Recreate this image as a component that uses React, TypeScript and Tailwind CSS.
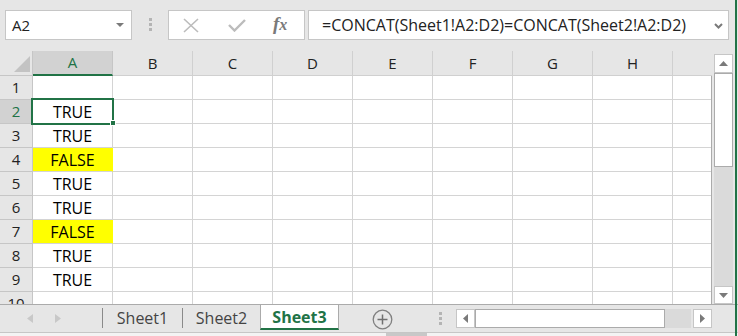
import React from 'react';

const cols = ['A', 'B', 'C', 'D', 'E', 'F', 'G', 'H'];

const rows: { n: number; v: string }[] = [
  { n: 1, v: '' },
  { n: 2, v: 'TRUE' },
  { n: 3, v: 'TRUE' },
  { n: 4, v: 'FALSE' },
  { n: 5, v: 'TRUE' },
  { n: 6, v: 'TRUE' },
  { n: 7, v: 'FALSE' },
  { n: 8, v: 'TRUE' },
  { n: 9, v: 'TRUE' },
  { n: 10, v: '' },
];

function TopBar() {
  return (
    <div className="h-[51px] shrink-0 flex items-start pt-[10px] pl-[5px]">
      <div className="relative w-[127px] h-[30px] bg-white border border-[#c6c6c6] flex items-center pl-[6px] text-[15px] text-[#222]">
        A2
        <svg className="absolute left-[110px] top-[12px]" width="8" height="5" viewBox="0 0 8 5">
          <polygon points="0,0 8,0 4,4" fill="#7a7a7a" />
        </svg>
      </div>
      <div className="ml-[17px] mt-[8px] flex flex-col gap-[2px]">
        <div className="w-[3px] h-[3px] bg-[#b4b4b4]" />
        <div className="w-[3px] h-[3px] bg-[#b4b4b4]" />
        <div className="w-[3px] h-[3px] bg-[#b4b4b4]" />
      </div>
      <div className="ml-[16px] w-[137px] h-[30px] bg-white border border-[#c6c6c6] flex items-center">
        <svg className="ml-[14px]" width="16" height="15" viewBox="0 0 16 15">
          <path d="M1 1 L15 14 M15 1 L1 14" stroke="#bcbcbc" strokeWidth="1.6" />
        </svg>
        <svg className="ml-[29px]" width="18" height="14" viewBox="0 0 18 14">
          <path d="M1 7 L6.5 12.5 L17 2" stroke="#bcbcbc" strokeWidth="2.4" fill="none" />
        </svg>
        <span className="ml-[27px] font-['Liberation_Serif',serif] italic font-bold text-[19px] text-[#7a7a7a] leading-none -mt-[3px]">
          f<span className="text-[16px]">x</span>
        </span>
      </div>
      <div className="ml-[3px] relative w-[421px] h-[30px] bg-white border border-[#c6c6c6] flex items-center pl-[13px] text-[16px] text-[#222] whitespace-nowrap">
        =CONCAT(Sheet1!A2:D2)=CONCAT(Sheet2!A2:D2)
        <svg className="absolute left-[405px] top-[12px]" width="9" height="6" viewBox="0 0 9 6">
          <path d="M1 1 L4.5 4.5 L8 1" stroke="#7a7a7a" strokeWidth="2" fill="none" />
        </svg>
      </div>
    </div>
  );
}

function Grid() {
  return (
    <div className="relative w-[712px] h-[253px] overflow-hidden">
      <div className="flex h-[25px] text-[15px] text-[#222]">
        <div className="relative w-[33px] border-r border-b border-[#c6c6c6]">
          <svg className="absolute left-[14px] top-[5px]" width="16" height="16" viewBox="0 0 16 16">
            <polygon points="16,0 16,16 0,16" fill="#c3c3c3" />
          </svg>
        </div>
        {cols.map((c) =>
          c === 'A' ? (
            <div
              key={c}
              className="w-[80px] bg-[#d2d2d2] border-r border-b-2 border-r-[#c6c6c6] border-b-[#217346] text-[#217346] flex items-center justify-center"
            >
              {c}
            </div>
          ) : (
            <div key={c} className="w-[80px] border-r border-b border-[#d0d0d0] flex items-center justify-center">
              {c}
            </div>
          ),
        )}
        <div className="w-[39px] border-b border-[#d0d0d0]" />
      </div>
      <div className="w-[712px] border-r border-[#ababab]">
        {rows.map((r) => (
          <div key={r.n} className="flex h-[24px]">
            <div
              className={
                r.n === 2
                  ? 'w-[33px] bg-[#d2d2d2] border-r border-b border-[#c6c6c6] text-[#217346] text-[15px] flex items-center justify-center'
                  : 'w-[33px] border-r border-b border-[#c6c6c6] text-[#222] text-[15px] flex items-center justify-center'
              }
            >
              {r.n}
            </div>
            <div
              className={
                r.v === 'FALSE'
                  ? 'w-[80px] bg-[#ffff00] border-r border-b border-r-[#ffff00] border-b-[#d4d4d4] text-[16px] text-black flex items-center justify-center'
                  : 'w-[80px] bg-white border-r border-b border-[#d4d4d4] text-[16px] text-black flex items-center justify-center'
              }
            >
              {r.v}
            </div>
            {cols.slice(1).map((c) => (
              <div key={c} className="w-[80px] bg-white border-r border-b border-[#d4d4d4]" />
            ))}
            <div className="w-[38px] bg-white border-b border-[#d4d4d4]" />
          </div>
        ))}
      </div>
      <div className="absolute left-[31px] top-[47px] w-[83px] h-[27px] border-2 border-[#217346]" />
      <div className="absolute left-[110px] top-[69px] w-[6px] h-[6px] bg-[#217346] border border-white" />
    </div>
  );
}

function VScroll() {
  return (
    <div className="w-[26px] h-[253px] flex flex-col pl-[2px] pr-[5px] pt-[3px]">
      <div className="h-[19px] bg-white border border-[#c6c6c6] flex items-center justify-center">
        <svg width="9" height="5" viewBox="0 0 9 5">
          <polygon points="0,5 9,5 4.5,0" fill="#7a7a7a" />
        </svg>
      </div>
      <div className="h-[94px] bg-white border border-[#ababab]" />
      <div className="flex-1 bg-[#dadada]" />
      <div className="h-[18px] bg-white border border-[#c6c6c6] flex items-center justify-center">
        <svg width="9" height="5" viewBox="0 0 9 5">
          <polygon points="0,0 9,0 4.5,5" fill="#7a7a7a" />
        </svg>
      </div>
    </div>
  );
}

function TabBar() {
  return (
    <div className="h-[28px] shrink-0 border-t border-[#ababab] flex items-start text-[16px]">
      <div className="w-[102px] h-[27px] flex items-center">
        <svg className="ml-[27px]" width="6" height="9" viewBox="0 0 6 9">
          <polygon points="6,0 6,9 0,4.5" fill="#c8c8c8" />
        </svg>
        <svg className="ml-[22px]" width="6" height="9" viewBox="0 0 6 9">
          <polygon points="0,0 0,9 6,4.5" fill="#c8c8c8" />
        </svg>
      </div>
      <div className="w-px h-[20px] mt-[3px] bg-[#8a8a8a]" />
      <div className="w-[79px] h-[25px] flex items-center justify-center text-[#444]">Sheet1</div>
      <div className="w-px h-[20px] mt-[3px] bg-[#8a8a8a]" />
      <div className="w-[77px] h-[25px] flex items-center justify-center text-[#444]">Sheet2</div>
      <div className="w-[79px] h-[25px] bg-white border-l border-r border-[#ababab] border-b-2 border-b-[#217346] flex items-center justify-center font-bold text-[#217346]">
        Sheet3
      </div>
      <svg className="ml-[33px] mt-[4px]" width="21" height="21" viewBox="0 0 21 21">
        <circle cx="10.5" cy="10.5" r="9.3" stroke="#808080" strokeWidth="1.3" fill="none" />
        <path d="M10.5 5.5 V15.5 M5.5 10.5 H15.5" stroke="#707070" strokeWidth="1.5" />
      </svg>
      <div className="ml-[46px] mt-[7px] flex flex-col gap-[2px]">
        <div className="w-[3px] h-[3px] bg-[#b4b4b4]" />
        <div className="w-[3px] h-[3px] bg-[#b4b4b4]" />
        <div className="w-[3px] h-[3px] bg-[#b4b4b4]" />
      </div>
      <div className="ml-[14px] mt-[4px] flex h-[19px]">
        <div className="w-[19px] bg-white border border-[#c6c6c6] flex items-center justify-center">
          <svg width="5" height="9" viewBox="0 0 5 9">
            <polygon points="5,0 5,9 0,4.5" fill="#7a7a7a" />
          </svg>
        </div>
        <div className="w-[190px] bg-white border border-[#ababab]" />
        <div className="w-[26px] bg-[#dadada]" />
        <div className="w-[2px]" />
        <div className="w-[19px] bg-white border border-[#c6c6c6] flex items-center justify-center">
          <svg width="5" height="9" viewBox="0 0 5 9">
            <polygon points="0,0 0,9 5,4.5" fill="#7a7a7a" />
          </svg>
        </div>
      </div>
    </div>
  );
}

export default function App() {
  return (
    <div className="relative w-[738px] h-[336px] overflow-hidden bg-[#e6e6e6] flex flex-col font-['Open_Sans',sans-serif]">
      <TopBar />
      <div className="flex h-[253px] shrink-0">
        <Grid />
        <VScroll />
      </div>
      <TabBar />
      <div className="h-[4px] shrink-0 border-t border-[#c6c6c6] bg-[#f3f3f3] flex">
        <div className="ml-[386px] w-[41px] bg-[#c8c8c8]" />
      </div>
      <div className="absolute right-[1px] top-0 bottom-0 w-[2px] bg-[#217346]" />
    </div>
  );
}
